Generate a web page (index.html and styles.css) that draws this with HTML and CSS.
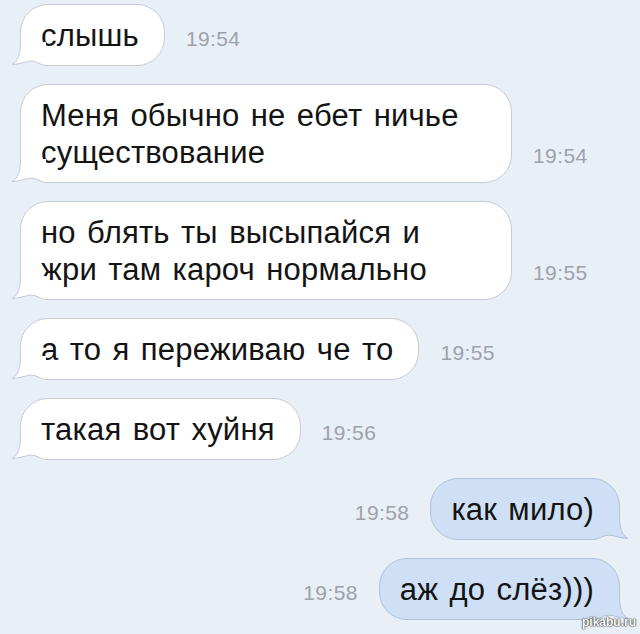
FILE: index.html
```html
<!DOCTYPE html>
<html lang="ru">

<head>
  <meta charset="UTF-8">
  <meta name="viewport" content="width=device-width, initial-scale=1.0">
  <title>Переписка</title>
  <link rel="stylesheet" href="styles.css">
</head>

<body>
  <div class="chat">
    <div class="row in">
      <div class="bubble">слышь
        <svg class="tail" width="36" height="24" viewBox="0 0 36 24">
          <path class="cover" d="M2 22.5 C9 22.5 15 19.5 21 19 C27 19 31 23.5 36 23.5 L36 24 L0 24 Z" />
          <path class="fill" d="M10.5 0 C10.5 12 8 19.5 2 22.5 C9 22.5 15 19.5 21 19 C27 19 31 23.5 36 23.5 L36 0 Z" />
          <path class="edge" d="M10.5 0 C10.5 12 8 19.5 2 22.5 C9 22.5 15 19.5 21 19 C27 19 31 23.5 36 23.5" />
        </svg>
      </div>
      <span class="time">19:54</span>
    </div>

    <div class="row in">
      <div class="bubble">Меня обычно не ебет ничье существование
        <svg class="tail" width="36" height="24" viewBox="0 0 36 24">
          <path class="cover" d="M2 22.5 C9 22.5 15 19.5 21 19 C27 19 31 23.5 36 23.5 L36 24 L0 24 Z" />
          <path class="fill" d="M10.5 0 C10.5 12 8 19.5 2 22.5 C9 22.5 15 19.5 21 19 C27 19 31 23.5 36 23.5 L36 0 Z" />
          <path class="edge" d="M10.5 0 C10.5 12 8 19.5 2 22.5 C9 22.5 15 19.5 21 19 C27 19 31 23.5 36 23.5" />
        </svg>
      </div>
      <span class="time">19:54</span>
    </div>

    <div class="row in">
      <div class="bubble">но блять ты высыпайся и жри там кароч нормально
        <svg class="tail" width="36" height="24" viewBox="0 0 36 24">
          <path class="cover" d="M2 22.5 C9 22.5 15 19.5 21 19 C27 19 31 23.5 36 23.5 L36 24 L0 24 Z" />
          <path class="fill" d="M10.5 0 C10.5 12 8 19.5 2 22.5 C9 22.5 15 19.5 21 19 C27 19 31 23.5 36 23.5 L36 0 Z" />
          <path class="edge" d="M10.5 0 C10.5 12 8 19.5 2 22.5 C9 22.5 15 19.5 21 19 C27 19 31 23.5 36 23.5" />
        </svg>
      </div>
      <span class="time">19:55</span>
    </div>

    <div class="row in">
      <div class="bubble">а то я переживаю че то
        <svg class="tail" width="36" height="24" viewBox="0 0 36 24">
          <path class="cover" d="M2 22.5 C9 22.5 15 19.5 21 19 C27 19 31 23.5 36 23.5 L36 24 L0 24 Z" />
          <path class="fill" d="M10.5 0 C10.5 12 8 19.5 2 22.5 C9 22.5 15 19.5 21 19 C27 19 31 23.5 36 23.5 L36 0 Z" />
          <path class="edge" d="M10.5 0 C10.5 12 8 19.5 2 22.5 C9 22.5 15 19.5 21 19 C27 19 31 23.5 36 23.5" />
        </svg>
      </div>
      <span class="time">19:55</span>
    </div>

    <div class="row in">
      <div class="bubble">такая вот хуйня
        <svg class="tail" width="36" height="24" viewBox="0 0 36 24">
          <path class="cover" d="M2 22.5 C9 22.5 15 19.5 21 19 C27 19 31 23.5 36 23.5 L36 24 L0 24 Z" />
          <path class="fill" d="M10.5 0 C10.5 12 8 19.5 2 22.5 C9 22.5 15 19.5 21 19 C27 19 31 23.5 36 23.5 L36 0 Z" />
          <path class="edge" d="M10.5 0 C10.5 12 8 19.5 2 22.5 C9 22.5 15 19.5 21 19 C27 19 31 23.5 36 23.5" />
        </svg>
      </div>
      <span class="time">19:56</span>
    </div>

    <div class="row out">
      <span class="time">19:58</span>
      <div class="bubble">как мило)
        <svg class="tail" width="36" height="24" viewBox="0 0 36 24">
          <path class="cover" d="M2 22.5 C9 22.5 15 19.5 21 19 C27 19 31 23.5 36 23.5 L36 24 L0 24 Z" />
          <path class="fill" d="M10.5 0 C10.5 12 8 19.5 2 22.5 C9 22.5 15 19.5 21 19 C27 19 31 23.5 36 23.5 L36 0 Z" />
          <path class="edge" d="M10.5 0 C10.5 12 8 19.5 2 22.5 C9 22.5 15 19.5 21 19 C27 19 31 23.5 36 23.5" />
        </svg>
      </div>
    </div>

    <div class="row out">
      <span class="time">19:58</span>
      <div class="bubble">аж до слёз)))
        <svg class="tail" width="36" height="24" viewBox="0 0 36 24">
          <path class="cover" d="M2 22.5 C9 22.5 15 19.5 21 19 C27 19 31 23.5 36 23.5 L36 24 L0 24 Z" />
          <path class="fill" d="M10.5 0 C10.5 12 8 19.5 2 22.5 C9 22.5 15 19.5 21 19 C27 19 31 23.5 36 23.5 L36 0 Z" />
          <path class="edge" d="M10.5 0 C10.5 12 8 19.5 2 22.5 C9 22.5 15 19.5 21 19 C27 19 31 23.5 36 23.5" />
        </svg>
      </div>
    </div>
  </div>

  <div class="mark">pikabu.ru</div>
</body>

</html>
```

FILE: styles.css
```css
body {
  margin: 0;
  width: 640px;
  height: 634px;
  overflow: hidden;
  position: relative;
  background: #e9eff7;
  font-family: 'Liberation Sans', Arial, sans-serif;
}

.chat {
  display: flex;
  flex-direction: column;
  gap: 18px;
  padding: 4px 20px 0 20px;
}

.row {
  display: flex;
  align-items: last baseline;
  gap: 21px;
}

.row.out {
  justify-content: flex-end;
}

.bubble {
  position: relative;
  box-sizing: border-box;
  max-width: 492px;
  padding: 12px 25px 11px 20px;
  background: #fff;
  border: 1px solid #c6cbd3;
  border-radius: 28px;
  border-bottom-left-radius: 0;
  font-size: 31px;
  line-height: 37px;
  letter-spacing: 0.2px;
  word-spacing: 2.5px;
  color: #141414;
}

.out .bubble {
  background: #cfe0f6;
  border-color: #b2c2d8;
  border-bottom-left-radius: 28px;
  border-bottom-right-radius: 0;
}

.time {
  flex-shrink: 0;
  font-size: 21px;
  letter-spacing: 0.4px;
  color: #9da2aa;
}

/* хвостик пузыря */
.tail {
  position: absolute;
  left: -11px;
  bottom: -1px;
  display: block;
}

.out .tail {
  left: auto;
  right: -11px;
  transform: scaleX(-1);
}

.tail .cover {
  fill: #e9eff7;
}

.tail .fill {
  fill: #fff;
}

.tail .edge {
  fill: none;
  stroke: #c6cbd3;
  stroke-width: 1;
}

.out .tail .fill {
  fill: #cfe0f6;
}

.out .tail .edge {
  stroke: #b2c2d8;
}

.mark {
  position: absolute;
  right: 4px;
  bottom: 5px;
  font-size: 12px;
  font-weight: bold;
  color: #fff;
  text-shadow: 0 0 1px #333, 0 0 1px #333, 0 0 2px #555;
}
```
